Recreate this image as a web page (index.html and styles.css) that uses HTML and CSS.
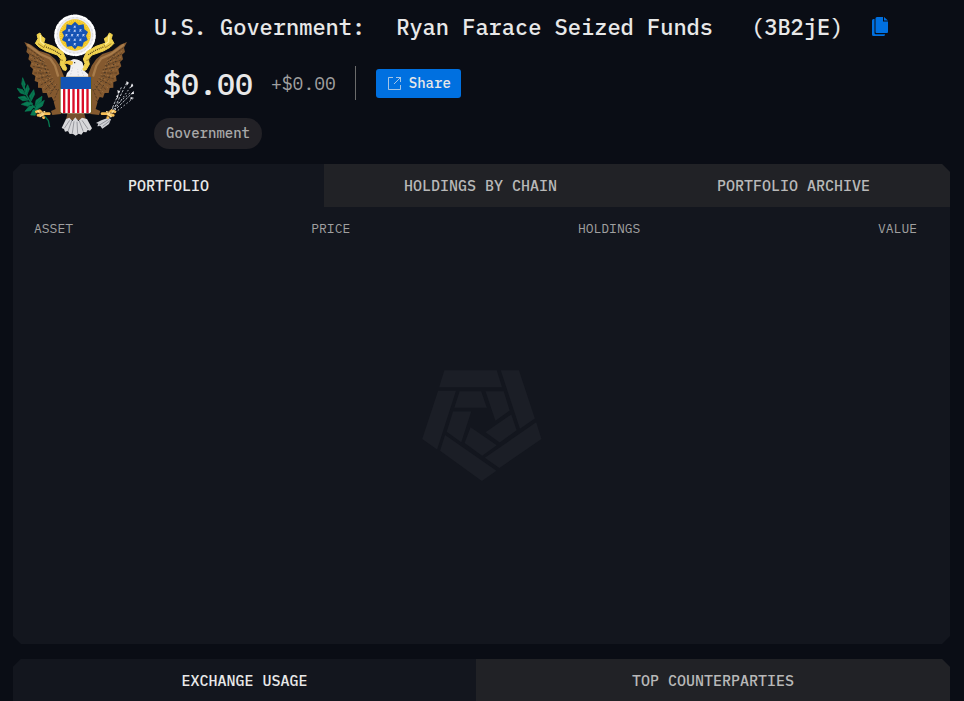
FILE: index.html
```html
<!DOCTYPE html>
<html lang="en">
<head>
  <meta charset="UTF-8" />
  <meta name="viewport" content="width=device-width, initial-scale=1.0" />
  <title>U.S. Government: Ryan Farace Seized Funds</title>
  <link rel="stylesheet" href="styles.css">
</head>
<body>
  <div class="page">

    <!-- ENTITY HEADER -->
    <header class="entity">
      <svg class="emblem" viewBox="21 27 354 366" aria-hidden="true">
        <defs>
          <g id="wing">
            <path fill="#84592f" d="M43 111l20 8 24 18 30 10 18 15 14 20 12 30v76l-14 6-8-8-8 2-6-12-10 2-5-14-12 0-3-15-11-1 0-16-10-4 2-15-10-6 3-15-9-8 4-13-9-8 3-14-9-8 3-13z"/>
            <path fill="none" stroke="#a77b4a" stroke-width="7" stroke-linecap="round" d="M54 120l38 28 28 12 15 22 9 30"/>
            <g fill="none" stroke="#49341f" stroke-width="2" stroke-dasharray="8 3">
              <path d="M53 128l48 34M58 146l48 28M61 165l50 18M68 184l48 10M73 204l46 0M82 222l41-10M92 240l36-20M106 254l27-26M120 268l20-30M134 280l12-28"/>
            </g>
            <g fill="none" stroke="#c19a68" stroke-width="1" stroke-dasharray="5 5">
              <path d="M58 138l46 31M61 156l48 22M66 176l47 13M72 194l47 6M78 214l44-5M88 232l40-15M100 248l31-22M114 262l24-25"/>
            </g>
            <g fill="none" stroke="#302b24" stroke-width="3" stroke-dasharray="3 7">
              <path d="M80 149l24 34 10 37 28 38M68 151l19 35 11 36 27 35"/>
            </g>
            <path fill="#84592f" d="M153 272l-22 18 6 22-14 6 4 12 26-3 6-20z"/>
          </g>
          <g id="ribbon">
            <path fill="#f0d24e" stroke="#f0d24e" stroke-width="3" stroke-linejoin="round" d="M90 84l-9 5 3 12-8 14 12 12 20 11 34 12 11 13-3 15 10 17 8 1 2-6-7-14 5-14-10-22-28-16-29-10 4-13-10-7z"/>
            <path fill="none" stroke="#4c3b1c" stroke-width="4" stroke-dasharray="3 3" d="M108 126l26 11 20 13"/>
            <path fill="none" stroke="#fff09a" stroke-width="4" d="M91 90l1 20 12 9"/>
            <path fill="none" stroke="#8a6a1c" stroke-width="2" d="M84 116l18 12 4-10M147 164l12 2"/>
          </g>
          <g id="claw" fill="none" stroke="#f6bd55" stroke-linecap="round">
            <path stroke-width="8" d="M79 320l10-3 10 8 19 1M84 331l13-2 4 9"/>
            <path stroke-width="4" stroke="#ffe39c" d="M84 318l7 9 13-7M90 335l11-8"/>
            <path stroke-width="2" stroke="#5c3511" d="M79 326l14-2M96 318l4 5M96 335l8-3"/>
          </g>
        </defs>

        <!-- glory -->
        <circle cx="195" cy="91" r="60" fill="#ececf0"/>
        <circle cx="195" cy="91" r="59" fill="none" stroke="#fff" stroke-width="7" stroke-linecap="round" stroke-dasharray="10 6"/>
        <circle cx="195" cy="91" r="53" fill="none" stroke="#c9cad3" stroke-width="2" stroke-dasharray="5 7"/>
        <circle cx="195" cy="90" r="47" fill="#f2c522"/>
        <circle cx="195" cy="90" r="43" fill="none" stroke="#f9dd60" stroke-width="5" stroke-dasharray="2 4"/>
        <path fill="#1452b4" d="M195 50l11 11 15-3 2 15 11 8-6 11 5 13-12 7-4 13-14-2-8 10-10-10-14 2-3-13-12-7 6-13-6-11 12-8 2-15 14 3z"/>
        <g fill="#b4c8f0">
          <path d="M191 62h8l-3 3 2 5-4-2-4 2 2-5zM174 73h8l-3 3 2 5-4-2-4 2 2-5zM191 74h8l-3 3 2 5-4-2-4 2 2-5zM208 73h8l-3 3 2 5-4-2-4 2 2-5zM166 87h8l-3 3 2 5-4-2-4 2 2-5zM183 87h8l-3 3 2 5-4-2-4 2 2-5zM200 87h8l-3 3 2 5-4-2-4 2 2-5zM217 87h8l-3 3 2 5-4-2-4 2 2-5zM174 101h8l-3 3 2 5-4-2-4 2 2-5zM191 101h8l-3 3 2 5-4-2-4 2 2-5zM208 101h8l-3 3 2 5-4-2-4 2 2-5zM191 114h8l-3 3 2 5-4-2-4 2 2-5z"/>
        </g>

        <!-- olive branch -->
        <path fill="none" stroke="#08764e" stroke-width="4" d="M38 228l9 38 22 38 31 25 15 18 4 19"/>
        <path fill="#087b53" stroke="#087b53" stroke-width="2" d="M38 218l8 20-5 13-6-14zM21 250l17 4 9 15-16-5zM53 239l5 13-7 17-5-15zM24 277l20-4 12 12-18 2zM71 254l3 14-11 21-5-16zM34 298l17-8 17 5-15 9zM96 274l-2 15-19 15 3-18zM45 319l13-16 16 0-12 14zM103 286l-6 17-22 13 4-15zM62 330l7-16 14 1-7 16z"/>
        <path fill="none" stroke="#034a34" stroke-width="1" d="M37 225l5 22M27 253l19 14M53 244l0 20M30 279l24 6M70 260l-9 24M92 280l-15 21"/>

        <!-- arrows -->
        <g fill="none" stroke="#b8bcc3" stroke-width="3">
          <path d="M300 338L352 229M304 326L372 259M298 330L334 247" stroke-dasharray="8 4"/>
          <path d="M308 322L367 238M306 330L371 279M306 311L362 262" stroke-dasharray="5 6"/>
        </g>
        <path fill="#e9e9ed" d="M349 229l8 4-7 9zM366 235l4 8-10 7zM322 255l8 4-6 9zM371 258l1 9-10 1zM318 273l7-3-1 11zM362 276l8 2-9 7z"/>
        <path fill="#cfd0d5" d="M295 338l-21 8-16 8 7 2-3 8 9-1 6 8 20-14 6-14z"/>
        <path fill="none" stroke="#6e7078" stroke-width="2" d="M296 343l-29 18M300 347l-22 17"/>

        <!-- eagle -->
        <path fill="#75502d" d="M174 315h46l8 30h-60z"/>
        <use href="#wing"/>
        <use href="#wing" transform="matrix(-1 0 0 1 394 0)"/>
        <use href="#claw"/>
        <use href="#claw" transform="matrix(-1 0 0 1 394 0)"/>
        <path fill="#d8d8db" d="M178 338l9 10 9-11 9 11 11-10 15 4 15 28-6 7-7-2-4 7-9-1-6 8-8-3-9 6-9-6-9 1-5-9-9 2-3-8-7-3 13-27z"/>
        <path fill="none" stroke="#75777f" stroke-width="2" d="M179 346l-16 24M185 348l-11 31M192 349l-5 35M201 350l2 36M208 348l12 32M216 346l18 26"/>
        <path fill="#f0f0f2" d="M179 168l10-5 14 1 12 6 5 12 3 15 11 10 1 10h-68l4-13 9-10 2-15-8-6z"/>
        <path fill="none" stroke="#b9bcc2" stroke-width="2" stroke-dasharray="4 5" d="M188 187l-7 25M202 181l3 31M214 194l7 19"/>
        <use href="#ribbon"/>
        <use href="#ribbon" transform="matrix(-1 0 0 1 388 0)"/>
        <path fill="#eee" d="M183 170l9-7 13 2 12 7 4 15-8 8-22-5-9-8z"/>
        <path fill="#f2c43c" d="M190 170l-12-4-11 3-5 9 9-2 8 4 8-1z"/>
        <circle cx="194" cy="173" r="2" fill="#151515"/>

        <!-- shield -->
        <path fill="#735d20" d="M149 215h97v105l-4 5h-89l-4-5z"/>
        <path fill="#fff" d="M152 251h91v70l-4 4h-83l-4-4z"/>
        <path fill="#1254b5" d="M152 216h91v36h-91z"/>
        <path fill="#d90e29" d="M159 252h7v72h-7zM173 252h7v72h-7zM187 252h7v72h-7zM201 252h7v72h-7zM215 252h7v72h-7zM229 252h7v72h-7z"/>
      </svg>

      <div class="entity-info">
        <h1 class="entity-title">
          <span class="entity-owner">U.S. Government:</span>
          <span class="entity-name">Ryan Farace Seized Funds</span>
          <span class="entity-address">(3B2jE)</span>
          <button type="button" class="copy-btn" aria-label="Copy address">
            <svg viewBox="0 0 16 20" width="16" height="20" aria-hidden="true">
              <path fill="currentColor" d="M5 0h6v4.500h5V15a1 1 0 0 1-1 1H4.500a1 1 0 0 1-1-1V1.500A1.500 1.500 0 0 1 5 0zM12 0l4 3.500h-4zM0 3.500A1.500 1.500 0 0 1 1.500 2H2.500v14A1.200 1.200 0 0 0 3.700 17.200H13v.3A1.500 1.500 0 0 1 11.500 19h-10A1.500 1.500 0 0 1 0 17.500z"/>
            </svg>
          </button>
        </h1>

        <div class="balance">
          <span class="balance-total">$0.00</span>
          <span class="balance-change">+$0.00</span>
          <button type="button" class="share-btn">
            <svg viewBox="0 0 13 13" width="13" height="13" fill="none" stroke="currentColor" stroke-opacity=".7" aria-hidden="true">
              <path d="M5 .5H.5v12h12V8M8 .5h4.500V5M12.500 .5L6 7"/>
            </svg>
            Share
          </button>
        </div>

        <a href="#" class="tag">Government</a>
      </div>
    </header>

    <!-- PORTFOLIO -->
    <section class="panel">
      <div class="tabs" role="tablist">
        <button type="button" role="tab" aria-selected="true" class="tab active">PORTFOLIO</button>
        <button type="button" role="tab" aria-selected="false" class="tab">HOLDINGS BY CHAIN</button>
        <button type="button" role="tab" aria-selected="false" class="tab">PORTFOLIO ARCHIVE</button>
      </div>
      <div class="panel-body">
        <table class="assets">
          <thead>
            <tr>
              <th class="col-asset">ASSET</th>
              <th class="col-price">PRICE</th>
              <th class="col-holdings">HOLDINGS</th>
              <th class="col-value">VALUE</th>
            </tr>
          </thead>
        </table>
        <svg class="watermark" viewBox="36 30 361 335" aria-hidden="true">
          <path d="M103 31H261L277 82H87zM273 31H328L376 176 331 207zM84 93H138L81 270 36 238zM105 226L260 334 216 365 90 274zM380 188L396 238 269 326 225 295z"/>
          <path d="M149 94H214L231 144H133zM227 94H282L300 152 257 183zM129 155H184L154 248 110 216zM182 203L261 257 217 289 164 250zM305 164L321 212 270 249 227 218z"/>
        </svg>
      </div>
    </section>

    <!-- EXCHANGES -->
    <section class="panel">
      <div class="tabs tabs-exchange" role="tablist">
        <button type="button" role="tab" aria-selected="true" class="tab active">EXCHANGE USAGE</button>
        <button type="button" role="tab" aria-selected="false" class="tab">TOP COUNTERPARTIES</button>
      </div>
    </section>

  </div>
</body>
</html>
```

FILE: styles.css
```css
* {
  box-sizing: border-box;
}

body {
  margin: 0;
  background: #0a0d15;
  color: #e8e8e8;
  font-family: "IBM Plex Mono", "Liberation Mono", monospace;
}

button {
  border: none;
  padding: 0;
  font-family: inherit;
  cursor: pointer;
}

.page {
  height: 100vh;
  overflow: hidden;
  padding: 14px 14px 0 13px;
}

/* HEADER */
.entity {
  display: flex;
  gap: 19px;
  padding-left: 4px;
  margin-bottom: 15px;
}

.emblem {
  width: 118px;
  height: 122px;
  flex-shrink: 0;
}

.entity-info {
  flex: 1;
}

.entity-title {
  display: flex;
  align-items: center;
  margin: 0;
  font-size: 22px;
  line-height: 26px;
  font-weight: 500;
  white-space: nowrap;
}

.entity-name {
  margin-left: 31px;
}

.entity-address {
  margin-left: 38px;
}

.copy-btn {
  display: flex;
  margin-left: 29px;
  background: none;
  color: #0070e0;
}

.balance {
  display: flex;
  align-items: center;
  height: 34px;
  margin: 26px 0 18px;
  padding-left: 9px;
}

.balance-total {
  font-size: 30px;
  font-weight: 500;
}

.balance-change {
  display: flex;
  align-items: center;
  align-self: stretch;
  margin: 0 20px 0 18px;
  padding-right: 19px;
  border-right: 1px solid #6b6b6b;
  color: #a0a0a0;
  font-size: 18px;
}

.share-btn {
  display: flex;
  align-items: center;
  gap: 8px;
  height: 29px;
  padding: 0 10px 0 12px;
  border-radius: 3px;
  background: #0070e0;
  color: #e8e8e8;
  font-size: 14px;
  font-weight: 500;
}

.share-btn:hover {
  background: #005fc0;
}

.tag {
  display: inline-block;
  padding: 0 12px;
  border-radius: 16px;
  background: #222126;
  color: #a8a8a8;
  font-size: 14px;
  font-weight: 500;
  line-height: 31px;
  text-decoration: none;
  vertical-align: top;
}

/* PANELS */
.panel {
  margin-bottom: 15px;
  background: #13161e;
  clip-path: polygon(8px 0, calc(100% - 8px) 0, 100% 8px, 100% calc(100% - 8px), calc(100% - 8px) 100%, 8px 100%, 0 calc(100% - 8px), 0 8px);
}

.panel:last-child {
  min-height: 240px;
}

.tabs {
  display: grid;
  grid-template-columns: 33.2% 1fr 1fr;
}

.tabs-exchange {
  grid-template-columns: 49.4% 1fr;
}

.tab {
  height: 43px;
  background: #212226;
  color: #b8b8b8;
  font-size: 15px;
  font-weight: 500;
}

.tab.active {
  background: #13161e;
  color: #e8e8e8;
}

/* the watermark shares the cell with the table */
.panel-body {
  display: grid;
  min-height: 437px;
}

.assets {
  grid-area: 1 / 1;
  align-self: start;
  margin: 0 33px 0 21px;
  border-collapse: collapse;
  table-layout: fixed;
}

.assets th {
  padding: 0;
  height: 43px;
  color: #a0a0a0;
  font-size: 13px;
  font-weight: 400;
  text-align: left;
}

.col-asset {
  width: 31.4%;
}

.col-price {
  width: 30.2%;
}

.assets .col-value {
  text-align: right;
}

.watermark {
  grid-area: 1 / 1;
  place-self: center;
  width: 120px;
  height: 111px;
  fill: #1b1e26;
}
```
